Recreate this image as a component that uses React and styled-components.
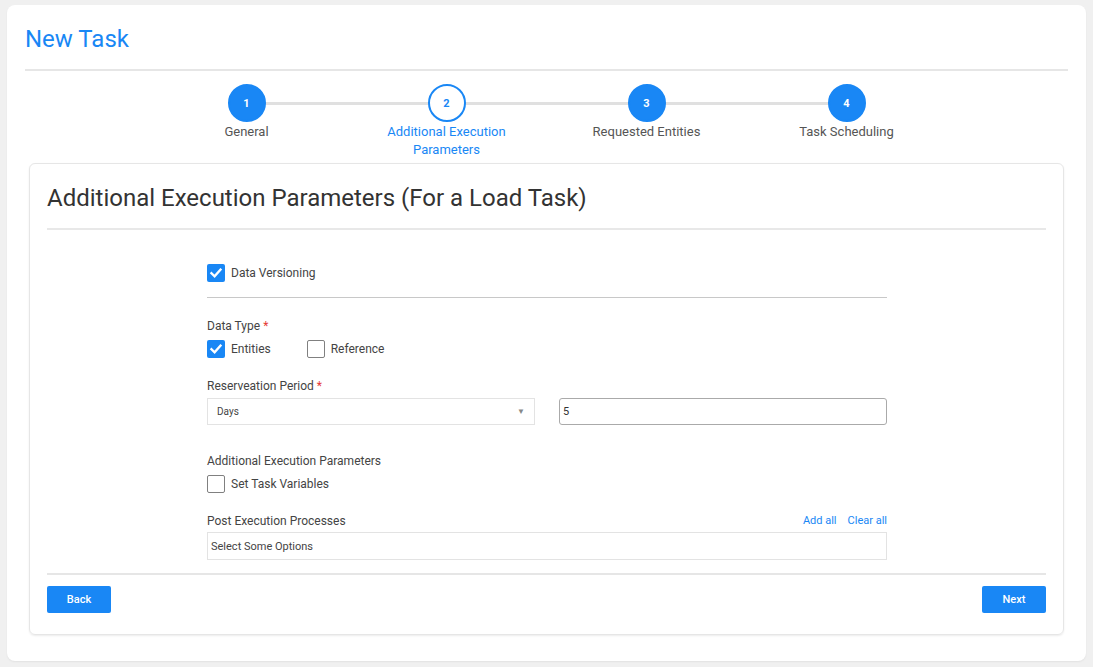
import React from "react";
import styled, { createGlobalStyle } from "styled-components";

const BLUE = "#1987f5";

const GlobalStyle = createGlobalStyle`
  body {
    margin: 0;
    background: #f0f0f0;
    font-family: Roboto, "Liberation Sans", Arial, sans-serif;
    color: #444;
  }
`;

const Page = styled.div`
  padding: 5px 7px 6px;
`;

const Card = styled.div`
  background: #fff;
  border-radius: 8px;
  padding: 20px 18px 26px;
  box-shadow: 0 1px 2px rgba(0, 0, 0, 0.06);
`;

const Title = styled.h1`
  margin: 0;
  font-size: 24px;
  line-height: 28px;
  font-weight: 400;
  color: ${BLUE};
`;

const TopRule = styled.div`
  height: 2px;
  background: #e6e6e6;
  margin-top: 16px;
`;

const Stepper = styled.div`
  display: flex;
  justify-content: center;
  margin-top: 13px;
`;

const Step = styled.div`
  position: relative;
  width: 200px;
  display: flex;
  flex-direction: column;
  align-items: center;

  &:not(:last-child)::after {
    content: "";
    position: absolute;
    top: 18px;
    left: 100px;
    width: 200px;
    height: 3px;
    background: #e0e0e0;
    z-index: 0;
  }
`;

const Circle = styled.div`
  position: relative;
  z-index: 1;
  width: 38px;
  height: 38px;
  box-sizing: border-box;
  border-radius: 50%;
  display: flex;
  align-items: center;
  justify-content: center;
  font-size: 11px;
  font-weight: 700;
  background: ${(p) => (p.$active ? "#fff" : BLUE)};
  color: ${(p) => (p.$active ? BLUE : "#fff")};
  border: 2px solid ${BLUE};
`;

const StepLabel = styled.div`
  max-width: 140px;
  margin-top: 1px;
  text-align: center;
  font-size: 13px;
  line-height: 18px;
  color: ${(p) => (p.$active ? BLUE : "#555")};
`;

const Inner = styled.div`
  margin: 4px 4px 0 4px;
  border: 1px solid #e6e6e6;
  border-radius: 6px;
  padding: 20px 17px 21px;
  box-shadow: 0 1px 2px rgba(0, 0, 0, 0.08);
`;

const Heading = styled.h2`
  margin: 0;
  font-size: 24px;
  line-height: 28px;
  font-weight: 400;
  color: #333;
`;

const HeadRule = styled.div`
  height: 2px;
  background: #e8e8e8;
  margin-top: 16px;
`;

const Form = styled.div`
  width: 680px;
  margin-left: 160px;
  padding-top: 34px;
  display: flex;
  flex-direction: column;
`;

const Row = styled.div`
  display: flex;
  align-items: center;
  gap: ${(p) => p.$gap || 0}px;
  margin-top: ${(p) => p.$top || 0}px;
`;

const Check = styled.label`
  display: flex;
  align-items: center;
  gap: 6px;
  font-size: 12px;
  color: #444;
`;

const Box = styled.span`
  width: 18px;
  height: 18px;
  box-sizing: border-box;
  border-radius: 2px;
  display: flex;
  align-items: center;
  justify-content: center;
  background: ${(p) => (p.$on ? BLUE : "#fff")};
  border: ${(p) => (p.$on ? "none" : "1px solid #808080")};
`;

const FormRule = styled.div`
  height: 1px;
  background: #c8c8c8;
  margin-top: 15px;
`;

const Label = styled.div`
  font-size: 12px;
  line-height: 16px;
  color: #444;
  margin-top: ${(p) => p.$top}px;
  display: flex;
  justify-content: space-between;
`;

const Star = styled.span`
  color: #e53935;
  margin-left: 3px;
`;

const Fields = styled.div`
  display: grid;
  grid-template-columns: 1fr 1fr;
  gap: 24px;
  margin-top: 4px;
`;

const Select = styled.div`
  height: 27px;
  box-sizing: border-box;
  border: 1px solid #e3e3e3;
  display: flex;
  align-items: center;
  justify-content: space-between;
  padding: 0 9px;
  font-size: 10px;
  color: #444;
`;

const Caret = styled.span`
  font-size: 8px;
  color: #888;
`;

const Input = styled.div`
  height: 27px;
  box-sizing: border-box;
  border: 1px solid #aaa;
  border-radius: 3px;
  display: flex;
  align-items: center;
  padding: 0 3px;
  font-size: 11px;
  color: #333;
`;

const Links = styled.div`
  display: flex;
  gap: 11px;
  font-size: 11px;
  color: ${BLUE};
`;

const Multi = styled.div`
  margin-top: 3px;
  height: 28px;
  box-sizing: border-box;
  border: 1px solid #e3e3e3;
  display: flex;
  align-items: center;
  padding: 0 3px;
  font-size: 11px;
  color: #444;
`;

const FootRule = styled.div`
  height: 2px;
  background: #e6e6e6;
  margin-top: 13px;
`;

const Footer = styled.div`
  display: flex;
  justify-content: space-between;
  margin-top: 11px;
`;

const Button = styled.button`
  width: 64px;
  height: 27px;
  border: none;
  border-radius: 2px;
  background: ${BLUE};
  color: #fff;
  font-family: inherit;
  font-size: 11px;
  font-weight: 500;
`;

const Tick = () => (
  <svg width="14" height="14" viewBox="0 0 14 14">
    <path d="M2.5 7.3 L5.6 10.3 L11.5 3.6" fill="none" stroke="#fff" strokeWidth="2.4" strokeLinecap="square" />
  </svg>
);

const CheckBox = ({ on, children }) => (
  <Check>
    <Box $on={on}>{on && <Tick />}</Box>
    {children}
  </Check>
);

const steps = ["General", "Additional Execution Parameters", "Requested Entities", "Task Scheduling"];

export default function App() {
  return (
    <Page>
      <GlobalStyle />
      <Card>
        <Title>New Task</Title>
        <TopRule />
        <Stepper>
          {steps.map((s, i) => (
            <Step key={s}>
              <Circle $active={i === 1}>{i + 1}</Circle>
              <StepLabel $active={i === 1}>{s}</StepLabel>
            </Step>
          ))}
        </Stepper>
        <Inner>
          <Heading>Additional Execution Parameters (For a Load Task)</Heading>
          <HeadRule />
          <Form>
            <Row>
              <CheckBox on>Data Versioning</CheckBox>
            </Row>
            <FormRule />
            <Label $top={20}>
              <span>Data Type<Star>*</Star></span>
            </Label>
            <Row $top={6} $gap={36}>
              <CheckBox on>Entities</CheckBox>
              <CheckBox>Reference</CheckBox>
            </Row>
            <Label $top={20}>
              <span>Reserveation Period<Star>*</Star></span>
            </Label>
            <Fields>
              <Select>
                Days
                <Caret>▼</Caret>
              </Select>
              <Input>5</Input>
            </Fields>
            <Label $top={28}>
              <span>Additional Execution Parameters</span>
            </Label>
            <Row $top={6}>
              <CheckBox>Set Task Variables</CheckBox>
            </Row>
            <Label $top={20}>
              <span>Post Execution Processes</span>
              <Links>
                <span>Add all</span>
                <span>Clear all</span>
              </Links>
            </Label>
            <Multi>Select Some Options</Multi>
          </Form>
          <FootRule />
          <Footer>
            <Button>Back</Button>
            <Button>Next</Button>
          </Footer>
        </Inner>
      </Card>
    </Page>
  );
}
